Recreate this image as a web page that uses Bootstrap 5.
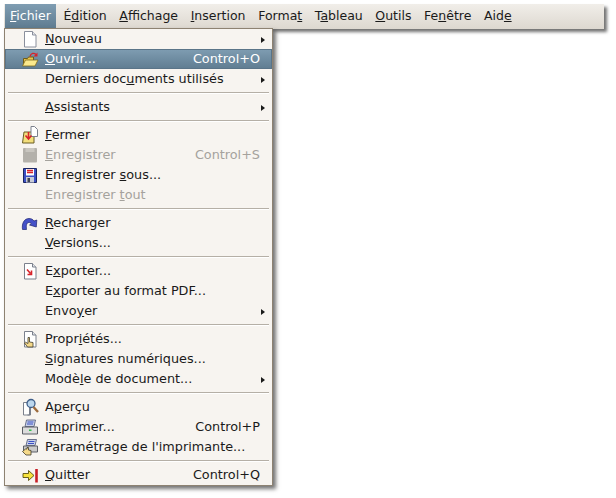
<!DOCTYPE html>
<html lang="fr">
<head>
    <meta charset="UTF-8">
    <meta name="viewport" content="width=device-width, initial-scale=1.0">
    <title>Menu Fichier</title>
    <link href="https://cdn.jsdelivr.net/npm/bootstrap@5.3.0/dist/css/bootstrap.min.css" rel="stylesheet">
    <style>
        body {
            background: #fff;
            font-family: "DejaVu Sans", sans-serif;
            font-size: 12.5px;
            color: #1a1a1a;
            padding: 4px 0 0 4px;
        }
        .app-wrap {
            width: 600px;
            position: relative;
        }
        .app-menubar {
            height: 25px;
            padding: 0 0 0 1px;
            gap: 2.6px;
            background: linear-gradient(#f1eee9, #ddd8d0);
            box-shadow: 3px 3px 3px rgba(0, 0, 0, .55);
        }
        .app-top {
            padding: 0 5px;
            height: 24px;
            line-height: 23px;
            color: #1a1a1a;
            text-decoration: none;
            white-space: nowrap;
        }
        .app-top.is-open {
            color: #fff;
            background: linear-gradient(#7f9db2, #5f7c91);
        }
        .app-menu {
            position: absolute;
            top: 24px;
            left: 0;
            width: 269px;
            padding: 0;
            border: 1px solid #8d8272;
            background: #f7f4f0;
            box-shadow: 3px 3px 4px rgba(0, 0, 0, .55);
        }
        .app-row {
            height: 20px;
            line-height: 19px;
            padding: 0 0 0 40px;
            font-size: 12.8px;
            color: #1a1a1a;
            position: relative;
            text-decoration: none;
        }
        .app-row.is-hover {
            color: #fff;
            background: linear-gradient(#7f9db2, #5f7c91);
            box-shadow: inset 0 0 0 1px #5a7488;
        }
        .app-row.is-off {
            color: #a5a29d;
        }
        .app-sep {
            height: 2px;
            margin: 3px;
            border-top: 1px solid #b5afa6;
            border-bottom: 1px solid #fff;
        }
        .app-key {
            margin-left: auto;
            padding-right: 12px;
        }
        .app-ico {
            position: absolute;
            left: 16px;
            top: 1px;
            width: 18px;
            height: 18px;
        }
        .app-arrow {
            position: absolute;
            right: 7px;
            top: 8px;
            border-left: 4px solid #1a1a1a;
            border-top: 3.5px solid transparent;
            border-bottom: 3.5px solid transparent;
        }
    </style>
</head>
<body class="min-vh-100">
    <div class="app-wrap">
        <nav class="app-menubar d-flex align-items-start">
            <a class="app-top is-open" href="#"><u>F</u>ichier</a>
            <a class="app-top" href="#">É<u>d</u>ition</a>
            <a class="app-top" href="#"><u>A</u>ffichage</a>
            <a class="app-top" href="#"><u>I</u>nsertion</a>
            <a class="app-top" href="#">Forma<u>t</u></a>
            <a class="app-top" href="#">T<u>a</u>bleau</a>
            <a class="app-top" href="#"><u>O</u>utils</a>
            <a class="app-top" href="#">Fe<u>n</u>être</a>
            <a class="app-top" href="#">Aid<u>e</u></a>
        </nav>

        <div class="app-menu">
            <a class="app-row d-flex" href="#">
                <svg class="app-ico" viewBox="0 0 18 18"><path d="M3.500 1.500h8l3.500 3.500v12h-11.500z" fill="#fff" stroke="#8a8f9c"/><path d="M11.500 1.500V5H15" fill="#e4e6ea" stroke="#8a8f9c"/></svg>
                <span><u>N</u>ouveau</span><span class="app-arrow"></span>
            </a>
            <a class="app-row d-flex is-hover" href="#">
                <svg class="app-ico" viewBox="0 0 18 18"><path d="M2.500 15V8.500h4l1-1.500h5v3" fill="#e8c64a" stroke="#6e5c1a"/><path d="M1.500 16l3-6h12.500l-3 6z" fill="#fbe98c" stroke="#7d6a1e" stroke-width=".8"/><path d="M9 6.500c1-3.500 4-4 6-2" fill="none" stroke="#d8232a" stroke-width="1.300"/><path d="M16.500 2.500v4h-4z" fill="#d8232a"/></svg>
                <span><u>O</u>uvrir...</span><span class="app-key">Control+O</span>
            </a>
            <a class="app-row d-flex" href="#"><span>Derniers doc<u>u</u>ments utilisés</span><span class="app-arrow"></span></a>
            <div class="app-sep"></div>
            <a class="app-row d-flex" href="#"><span><u>A</u>ssistants</span><span class="app-arrow"></span></a>
            <div class="app-sep"></div>
            <a class="app-row d-flex" href="#">
                <svg class="app-ico" viewBox="0 0 18 18"><path d="M3 6h10v11H1.500z" fill="#f3df7c" stroke="#6b5d24"/><path d="M10 .5h3.500l3 3v7H10z" fill="#fff" stroke="#7b808c"/><path d="M7.500 6v6M4.500 9.500l3 3.500 3-3.500" fill="none" stroke="#d8232a" stroke-width="1.600"/></svg>
                <span><u>F</u>ermer</span>
            </a>
            <a class="app-row d-flex is-off" href="#">
                <svg class="app-ico" viewBox="0 0 18 18"><rect x="2" y="2" width="14" height="14.500" rx="1" fill="#b4b1ab"/><path d="M4.500 2h9v4h-9z" fill="#c9c6c0"/></svg>
                <span><u>E</u>nregistrer</span><span class="app-key">Control+S</span>
            </a>
            <a class="app-row d-flex" href="#">
                <svg class="app-ico" viewBox="0 0 18 18"><path d="M2.500 2.500h13v14h-13z" fill="#3b4fc4" stroke="#1b2560"/><path d="M5 3h8v6.500H5z" fill="#fff"/><path d="M6 4.500h6M6 6.500h6" stroke="#d8232a" stroke-width="1.300"/><path d="M5 11h8v5.500H5z" fill="#c9ccd6"/><path d="M6.500 12h2.500v4H6.500z" fill="#3c4050"/></svg>
                <span>Enregistrer <u>s</u>ous...</span>
            </a>
            <a class="app-row d-flex is-off" href="#"><span>Enregistrer <u>t</u>out</span></a>
            <div class="app-sep"></div>
            <a class="app-row d-flex" href="#">
                <svg class="app-ico" viewBox="0 0 18 18"><path d="M1.500 15.500c-1-6.500 2-11 6.500-11 2.500 0 4 1 5 2.500l2.800-1-.5 7-6.800-2 2-1c-.6-1-1.500-1.500-2.500-1.500-2.500 0-3 3-2.500 7z" fill="#4450c8" stroke="#1d2270" stroke-width=".7"/></svg>
                <span><u>R</u>echarger</span>
            </a>
            <a class="app-row d-flex" href="#"><span><u>V</u>ersions...</span></a>
            <div class="app-sep"></div>
            <a class="app-row d-flex" href="#">
                <svg class="app-ico" viewBox="0 0 18 18"><path d="M3.500 1.500h8l3.500 3.500v12h-11.500z" fill="#fff" stroke="#7b808c"/><path d="M11.500 1.500V5H15" fill="#e4e6ea" stroke="#7b808c"/><path d="M6 7.500l3.500 4M6.500 12.500H10.500V8.500" fill="none" stroke="#d8232a" stroke-width="1.600"/></svg>
                <span>E<u>x</u>porter...</span>
            </a>
            <a class="app-row d-flex" href="#"><span>E<u>x</u>porter au format PDF...</span></a>
            <a class="app-row d-flex" href="#"><span>Envo<u>y</u>er</span><span class="app-arrow"></span></a>
            <div class="app-sep"></div>
            <a class="app-row d-flex" href="#">
                <svg class="app-ico" viewBox="0 0 18 18"><path d="M3.500 1.500h8l3.500 3.500v12h-11.500z" fill="#fff" stroke="#7b808c"/><path d="M11.500 1.500V5H15" fill="#e4e6ea" stroke="#7b808c"/><path d="M7 7.500h1.500v4.500l3.500.5v4.500H6.500l-3-4 1-.8 2.500 1.300z" fill="#f5d98a" stroke="#3f3a2a" stroke-width=".8"/></svg>
                <span>Propr<u>i</u>étés...</span>
            </a>
            <a class="app-row d-flex" href="#"><span><u>S</u>ignatures numériques...</span></a>
            <a class="app-row d-flex" href="#"><span>Modè<u>l</u>e de document...</span><span class="app-arrow"></span></a>
            <div class="app-sep"></div>
            <a class="app-row d-flex" href="#">
                <svg class="app-ico" viewBox="0 0 18 18"><path d="M2.500 4.500h6v12.500h-6z" fill="#fff" stroke="#7b808c"/><path d="M9.500 8v9h-3" fill="none" stroke="#7b808c"/><circle cx="10" cy="5.500" r="4" fill="#bcd7ee" stroke="#3f5f8a" stroke-width="1.300"/><path d="M12.500 9l4.500 5" stroke="#9c6a3c" stroke-width="2.400"/></svg>
                <span>A<u>p</u>erçu</span>
            </a>
            <a class="app-row d-flex" href="#">
                <svg class="app-ico" viewBox="0 0 18 18"><path d="M5.500 2h9l-1.500 6.500H4z" fill="#c7d0e8" stroke="#4b5474" stroke-width=".8"/><path d="M6.500 4h6M6 6h6" stroke="#3b4fc4"/><path d="M1.500 9h15v7h-15z" fill="#dcdcdc" stroke="#5c5f66"/><path d="M8 11.500h2.500V13H8z" fill="#2fc04a"/></svg>
                <span>I<u>m</u>primer...</span><span class="app-key">Control+P</span>
            </a>
            <a class="app-row d-flex" href="#">
                <svg class="app-ico" viewBox="0 0 18 18"><path d="M6.500 1.500h9l-1.500 6h-9z" fill="#c7d0e8" stroke="#4b5474" stroke-width=".8"/><path d="M7.500 3.500h6M7 5.500h6" stroke="#3b4fc4"/><path d="M2.500 8h14v6h-14z" fill="#c9c9c9" stroke="#5c5f66"/><path d="M4.500 11H6V9.500h1.500V12l2.500.5V17H5l-3.500-3.500 1-.8z" fill="#f5d98a" stroke="#3f3a2a" stroke-width=".8"/></svg>
                <span>Paramétrage de l'imprimante...</span>
            </a>
            <div class="app-sep"></div>
            <a class="app-row d-flex" href="#">
                <svg class="app-ico" viewBox="0 0 18 18"><path d="M2 7.500h5.500V4.500L13 9.500l-5.500 5v-3H2z" fill="#f6e23c" stroke="#5a5010" stroke-width=".9"/><path d="M15.500 3v13.500" stroke="#c81e26" stroke-width="2.600"/></svg>
                <span><u>Q</u>uitter</span><span class="app-key">Control+Q</span>
            </a>
        </div>
    </div>

    <script src="https://cdn.jsdelivr.net/npm/bootstrap@5.3.0/dist/js/bootstrap.bundle.min.js"></script>
</body>
</html>
